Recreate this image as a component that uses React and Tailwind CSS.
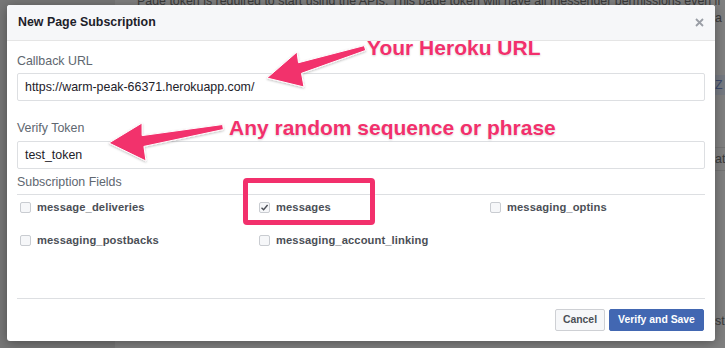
import React from 'react';

const PINK = '#f2306c';

function Checkbox({ checked }) {
    return (
        <span className="flex h-[11px] w-[11px] shrink-0 items-center justify-center rounded-[2px] border border-[#c9ccd1] bg-[#f6f7f9]">
            {checked && (
                <svg width="9" height="9" viewBox="0 0 9 9">
                    <path d="M1.5 4.8 L3.6 6.8 L7.6 2" fill="none" stroke="#4b4f56" strokeWidth="1.4" />
                </svg>
            )}
        </span>
    );
}

function Field({ name, checked }) {
    return (
        <label className="flex h-[22px] items-center gap-[6px]">
            <Checkbox checked={checked} />
            <span className="text-[11.2px] font-bold tracking-[0.1px] text-[#4b4f56]">{name}</span>
        </label>
    );
}

function App() {
    return (
        <div className="relative h-[348px] w-[725px] overflow-hidden bg-[#808080] font-['Liberation_Sans',Arial,sans-serif]">
            {/* page behind the overlay */}
            <div className="flex h-full">
                <div className="w-[115px] bg-[#777777]" />
                <div className="flex flex-1 flex-col">
                    <p className="-mt-[9px] whitespace-nowrap pl-[22px] text-[12.4px] leading-[20px] text-[#3b3b3b]">
                        Page token is required to start using the APIs. This page token will have all messenger permissions even if
                    </p>
                    <div className="flex flex-col items-end text-[12.4px] text-[#3b3b3b]">
                        <span className="w-[10px] leading-[14px]">a</span>
                        <span className="mt-[50px] w-[10px] bg-[#767a82] leading-[20px] text-[#3c4a6e]">Z</span>
                        <span className="mt-[52px] w-[10px] border-y border-[#747474] leading-[22px]">atu</span>
                        <span className="mt-[140px] w-[10px] leading-[20px]">st</span>
                    </div>
                </div>
            </div>

            {/* dialog */}
            <div className="absolute left-[7px] top-[5px] flex h-[336px] w-[708px] flex-col rounded-[3px] bg-white shadow-[0_2px_12px_rgba(0,0,0,0.35)]">
                <div className="flex h-[36px] items-center justify-between rounded-t-[3px] border-b border-[#e5e5e5] bg-[#f6f7f9] pl-[11px] pr-[11px]">
                    <span className="text-[12.4px] font-bold text-[#1d2129]">New Page Subscription</span>
                    <svg width="9" height="9" viewBox="0 0 9 9">
                        <path d="M1 1 L8 8 M8 1 L1 8" stroke="#9a9ea6" strokeWidth="1.8" />
                    </svg>
                </div>

                <div className="flex flex-1 flex-col px-[10px] pt-[12px]">
                    <div className="mb-[4px] text-[12.4px] leading-[16px] text-[#606770]">Callback URL</div>
                    <div className="flex h-[28px] items-center rounded-[2px] border border-[#dddfe2] px-[7px] text-[12.4px] text-[#1d2129]">
                        https://warm-peak-66371.herokuapp.com/
                    </div>

                    <div className="mb-[5px] mt-[19px] text-[12.4px] leading-[16px] text-[#606770]">Verify Token</div>
                    <div className="flex h-[28px] items-center rounded-[2px] border border-[#dddfe2] px-[7px] text-[12.4px] text-[#1d2129]">
                        test_token
                    </div>

                    <div className="mt-[5px] border-b border-[#dddfe2] pb-[4px] text-[12.4px] leading-[16px] text-[#606770]">
                        Subscription Fields
                    </div>

                    <div className="grid grid-cols-[239px_231px_1fr] gap-y-[11px] pl-[3px] pt-[1px]">
                        <Field name="message_deliveries" />
                        <Field name="messages" checked />
                        <Field name="messaging_optins" />
                        <Field name="messaging_postbacks" />
                        <Field name="messaging_account_linking" />
                    </div>
                </div>

                <div className="mx-[10px] flex h-[43px] items-center justify-end gap-[4px] border-t border-[#dddfe2] pr-[1px]">
                    <button className="flex h-[22px] w-[50px] items-center justify-center rounded-[2px] border border-[#ced0d4] bg-[#f6f7f9] text-[10.4px] font-bold text-[#4b4f56]">
                        Cancel
                    </button>
                    <button className="flex h-[22px] w-[95px] items-center justify-center rounded-[2px] border border-[#4267b2] bg-[#4267b2] text-[10.4px] font-bold text-white">
                        Verify and Save
                    </button>
                </div>
            </div>

            {/* annotations */}
            <svg className="pointer-events-none absolute left-0 top-0" width="725" height="348" viewBox="0 0 725 348">
                <defs>
                    <filter id="glow" x="-20%" y="-20%" width="140%" height="140%">
                        <feDropShadow dx="0" dy="1" stdDeviation="1" floodColor="#000" floodOpacity="0.25" />
                    </filter>
                </defs>
                <polygon
                    points="267,78 297,52 298.5,62.7 364.3,45.6 365.7,50.4 301.5,73.3 304,87"
                    fill={PINK}
                    stroke="#fff"
                    strokeWidth="1"
                    strokeLinejoin="round"
                    filter="url(#glow)"
                />
                <polygon
                    points="109,143 142,123 142.1,135.6 222.6,124.5 223.4,129.5 143.9,146.4 146,161"
                    fill={PINK}
                    stroke="#fff"
                    strokeWidth="1"
                    strokeLinejoin="round"
                    filter="url(#glow)"
                />
            </svg>
            <div className="pointer-events-none absolute left-[243px] top-[178px] h-[47px] w-[132px] rounded-[4px] border-[5px] border-[#f2306c] shadow-[0_0_2px_rgba(255,255,255,0.9)]" />
            <div className="pointer-events-none absolute left-[367px] top-[37px] whitespace-nowrap text-[21px] font-bold leading-none text-[#f2306c] [text-shadow:0_0_2px_#fff,0_1px_2px_rgba(0,0,0,0.2)]">
                Your Heroku URL
            </div>
            <div className="pointer-events-none absolute left-[229px] top-[117px] whitespace-nowrap text-[21px] font-bold leading-none text-[#f2306c] [text-shadow:0_0_2px_#fff,0_1px_2px_rgba(0,0,0,0.2)]">
                Any random sequence or phrase
            </div>
        </div>
    );
}

export default App;
